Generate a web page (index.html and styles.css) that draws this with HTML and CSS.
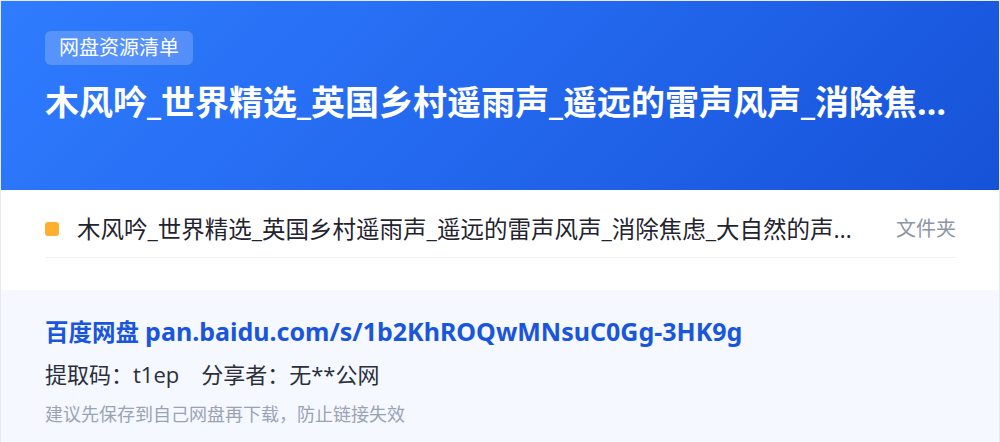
FILE: index.html
```html
<!DOCTYPE html>
<html lang="zh-CN">
<head>
<meta charset="utf-8">
<title>网盘资源清单</title>
<link rel="stylesheet" href="styles.css">
</head>
<body>
<div class="card">
  <header class="hero">
    <span class="badge">网盘资源清单</span>
    <h1 class="title">木风吟_世界精选_英国乡村遥雨声_遥远的雷声风声_消除焦虑_大自然的声音_白噪音</h1>
  </header>
  <section class="list">
    <div class="row">
      <span class="dot"></span>
      <span class="name">木风吟_世界精选_英国乡村遥雨声_遥远的雷声风声_消除焦虑_大自然的声音_白噪音</span>
      <span class="type">文件夹</span>
    </div>
  </section>
  <footer class="share">
    <div class="link"><span class="brand">百度网盘</span> <span class="url">pan.baidu.com/s/1b2KhROQwMNsuC0Gg-3HK9g</span></div>
    <div class="meta"><span class="code">提取码：t1ep</span><span class="sharer">分享者：无**公网</span></div>
    <div class="tip">建议先保存到自己网盘再下载，防止链接失效</div>
  </footer>
</div>
</body>
</html>
```

FILE: styles.css
```css
* { box-sizing: border-box; }
html, body { margin: 0; padding: 0; background: #ffffff; }
body {
  font-family: "Open Sans", "Noto Sans CJK SC", sans-serif;
  width: 1000px;
  height: 442px;
  overflow: hidden;
}
.card {
  width: 1000px;
  border: 1px solid #e6eaf0;
  border-bottom: none;
  background: #ffffff;
}
.hero {
  height: 189px;
  padding: 30px 44px 0;
  background: linear-gradient(135deg, #2f7cff 0%, #2368ee 50%, #1652d8 100%);
  color: #ffffff;
}
.badge {
  display: inline-block;
  height: 34px;
  padding: 0 14px;
  line-height: 34px;
  font-size: 20px;
  border-radius: 6px;
  background: rgba(255, 255, 255, 0.2);
  color: #ffffff;
}
.title {
  margin: 15px 0 0;
  font-size: 34px;
  line-height: 44px;
  font-weight: 700;
  white-space: nowrap;
  overflow: hidden;
  text-overflow: ellipsis;
}
.list {
  padding: 0 43px 32px 44px;
}
.row {
  display: flex;
  align-items: center;
  padding: 22px 0 11px;
  border-bottom: 1px solid #eef0f5;
}
.dot {
  flex: none;
  width: 14px;
  height: 14px;
  border-radius: 3px;
  background: #ffb02e;
  margin-right: 18px;
}
.name {
  flex: 1;
  min-width: 0;
  font-size: 23.5px;
  line-height: 34px;
  color: #1f2430;
  white-space: nowrap;
  overflow: hidden;
  text-overflow: ellipsis;
  margin-right: 26px;
}
.type {
  flex: none;
  font-size: 20px;
  line-height: 34px;
  color: #8c95a6;
}
.share {
  background: #f5f8ff;
  height: 152px;
  padding: 26px 44px 0;
}
.link {
  font-size: 23.5px;
  line-height: 30px;
  font-weight: 700;
  color: #1a56db;
  white-space: nowrap;
}
.url {
  font-family: "Noto Sans", "Open Sans", sans-serif;
  font-size: 25px;
}
.meta {
  margin-top: 12px;
  font-size: 22px;
  line-height: 30px;
  color: #2a2f3a;
}
.sharer { margin-left: 22px; }
.tip {
  margin-top: 12px;
  font-size: 18px;
  line-height: 26px;
  color: #9aa3b5;
}
```
